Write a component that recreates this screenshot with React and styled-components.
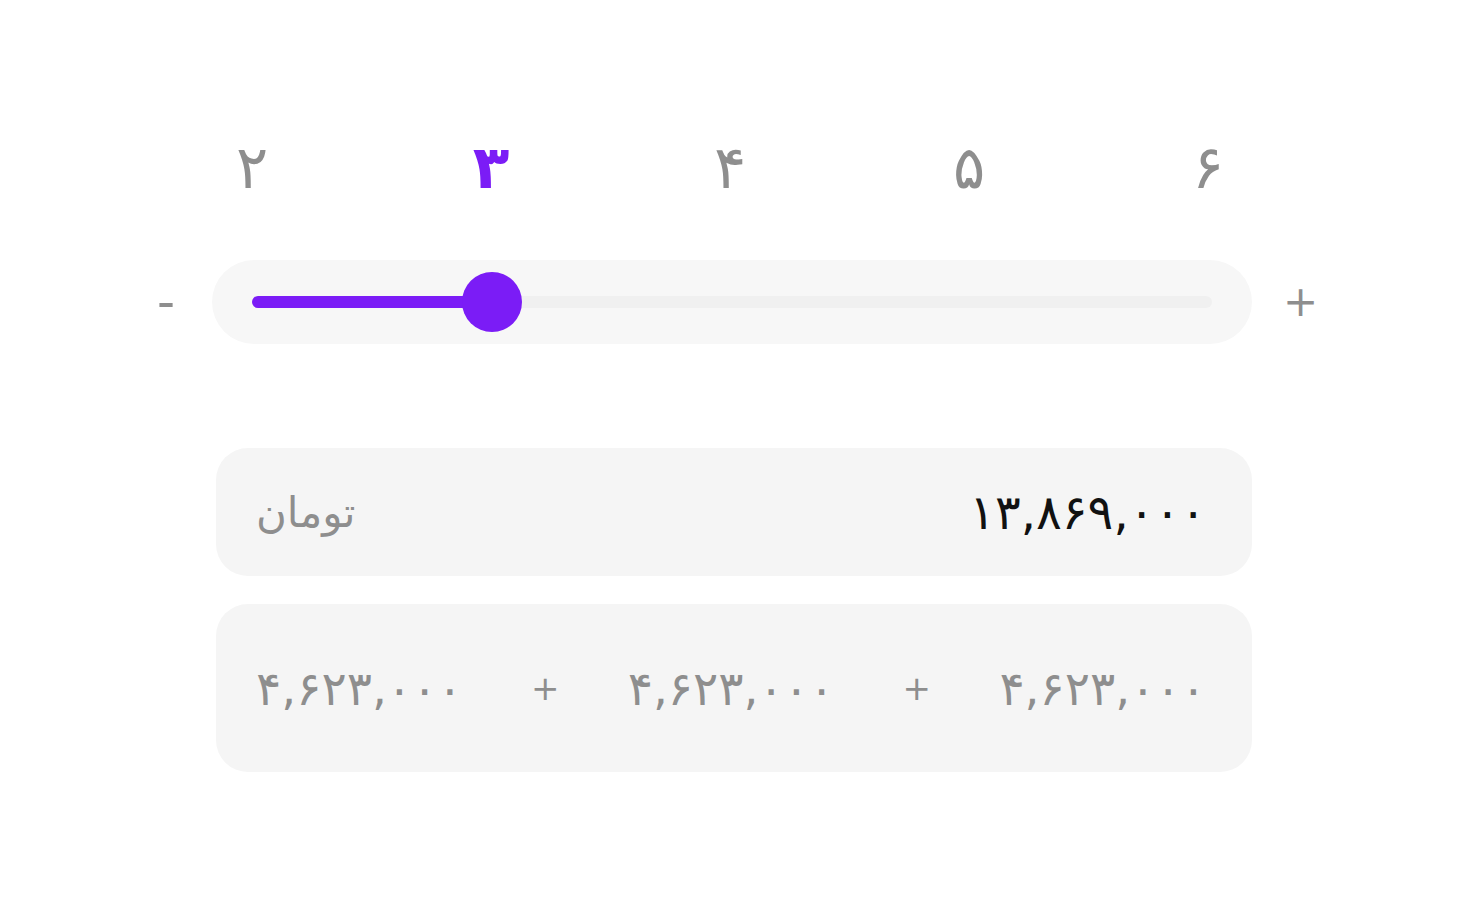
import styled, { createGlobalStyle } from "styled-components";

const GlobalStyle = createGlobalStyle`
  html, body {
    margin: 0;
    padding: 0;
    background: #ffffff;
    font-family: "DejaVu Sans", "Noto Sans", sans-serif;
  }
`;

const steps = ["۲", "۳", "۴", "۵", "۶"];
const current = 1;
const parts = ["۴,۶۲۳,۰۰۰", "۴,۶۲۳,۰۰۰", "۴,۶۲۳,۰۰۰"];

const Page = styled.div`
  width: 1460px;
  height: 900px;
  padding: 120px 0 0 152px;
  box-sizing: border-box;
  display: flex;
  flex-direction: column;
`;

const Labels = styled.div`
  display: flex;
  justify-content: space-between;
  margin-left: 100px;
  width: 956px;
  height: 94px;
  align-items: center;
`;

const Label = styled.div`
  width: 0;
  display: flex;
  justify-content: center;
  font-size: 60px;
  line-height: 1;
  color: ${(p) => (p.$active ? "#7b1cf6" : "#8e8e8e")};
  font-weight: ${(p) => (p.$active ? 700 : 400)};
  white-space: nowrap;
`;

const SliderRow = styled.div`
  display: flex;
  align-items: center;
  margin-top: 46px;
`;

const Step = styled.div`
  width: 60px;
  display: flex;
  align-items: center;
  font-size: ${(p) => (p.$end ? "42px" : "50px")};
  line-height: 1;
  color: #8e8e8e;
  padding-left: ${(p) => (p.$end ? "31px" : "5px")};
  box-sizing: border-box;
`;

const TrackBox = styled.div`
  width: 1040px;
  height: 84px;
  border-radius: 42px;
  background: #f7f7f7;
  display: flex;
  align-items: center;
  padding: 0 40px;
  box-sizing: border-box;
`;

const Track = styled.div`
  position: relative;
  flex: 1;
  height: 12px;
  border-radius: 6px;
  background: #f0f0f0;
`;

const Fill = styled.div`
  height: 100%;
  border-radius: 6px;
  background: #7b1cf6;
`;

const Thumb = styled.div`
  position: absolute;
  top: 50%;
  width: 60px;
  height: 60px;
  border-radius: 50%;
  background: #7b1cf6;
  transform: translate(-50%, -50%);
`;

const Card = styled.div`
  margin-left: 64px;
  width: 1036px;
  height: ${(p) => p.$h}px;
  margin-top: ${(p) => p.$top}px;
  border-radius: 32px;
  background: #f5f5f5;
  display: flex;
  align-items: center;
  justify-content: space-between;
  padding: 0 46px 0 40px;
  box-sizing: border-box;
`;

const Unit = styled.span`
  font-size: 42px;
  color: #8e8e8e;
`;

const Total = styled.span`
  font-size: 48px;
  color: #111111;
`;

const Part = styled.span`
  font-size: 47px;
  color: #8e8e8e;
`;

const Plus = styled.span`
  font-size: 34px;
  color: #8e8e8e;
`;

export default function App() {
  const pct = (current / (steps.length - 1)) * 100;
  return (
    <>
      <GlobalStyle />
      <Page>
        <Labels>
          {steps.map((s, i) => (
            <Label key={s} $active={i === current}>
              {s}
            </Label>
          ))}
        </Labels>
        <SliderRow>
          <Step>-</Step>
          <TrackBox>
            <Track>
              <Fill style={{ width: `${pct}%` }} />
              <Thumb style={{ left: `${pct}%` }} />
            </Track>
          </TrackBox>
          <Step $end>+</Step>
        </SliderRow>
        <Card $h={128} $top={104}>
          <Unit>تومان</Unit>
          <Total>۱۳,۸۶۹,۰۰۰</Total>
        </Card>
        <Card $h={168} $top={28}>
          {parts.map((p, i) => (
            <>
              {i > 0 && <Plus key={"p" + i}>+</Plus>}
              <Part key={i}>{p}</Part>
            </>
          ))}
        </Card>
      </Page>
    </>
  );
}
